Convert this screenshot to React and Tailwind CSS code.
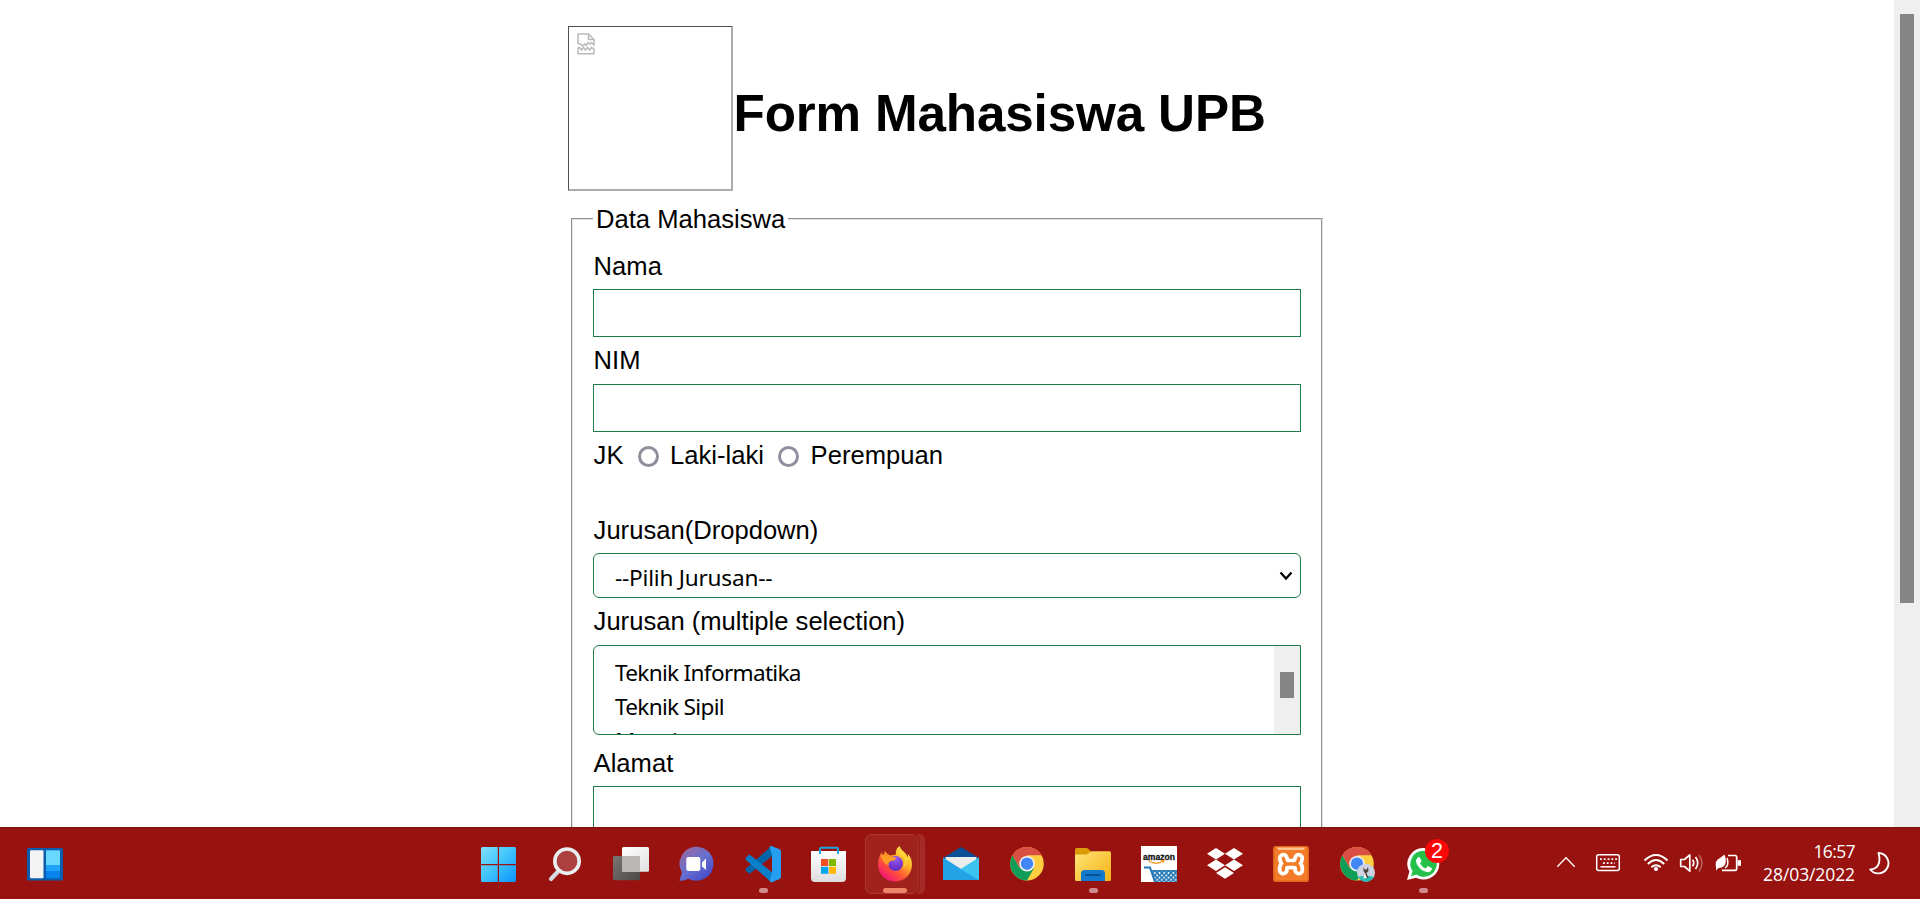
import React from "react";

const inputBorder = "border border-[#1c7c4a]";
const optionText = "font-['Noto_Sans',sans-serif] text-[22.6px] whitespace-nowrap";

function Label({ children, className = "h-[47px] pt-2" }) {
  return <div className={`pl-[0.6px] leading-[30px] whitespace-nowrap ${className}`}>{children}</div>;
}

function Radio({ className }) {
  return <span className={`size-[21px] shrink-0 rounded-full border-[3px] border-[#8f8f9d] ${className}`} />;
}

function BrokenImage() {
  return (
    <div className="h-[165px] w-[165px] shrink-0 border-t border-r-2 border-b-2 border-l border-t-[#505050] border-r-[#acacac] border-b-[#acacac] border-l-[#505050] pt-[6px] pl-[8px]">
      <svg width="18" height="22" viewBox="0 0 18 22" fill="none" stroke="#bababa" strokeWidth="1.500">
        <path d="M1 10.500V1h10.500l5.500 5.500V12l-2.500-2.500-1.500 1.500-2-1.500-2 3-1.500-1.500-2 2L3.500 11z" />
        <path d="M11.500 1v5.500H17" />
        <path d="M1 20.800V15l1.500-.5L4.500 17l2-2.500 2 2.500 2-2.500 2 2.500 2-2.500 2.500 1.500v4.800z" />
      </svg>
    </div>
  );
}

function PageScrollbar() {
  return (
    <div className="w-[26px] shrink-0 bg-[#efefef] px-[6px] pt-[14px]">
      <div className="h-[589px] w-[14px] bg-[#858585]" />
    </div>
  );
}

function Form() {
  return (
    <fieldset className="mt-[13px] ml-[3px] min-h-[700px] w-[751px] border-2 border-[#e3e3e3] px-[20px] pt-[8px] [border-style:groove]">
      <legend className="px-[3px] leading-[30px]">Data Mahasiswa</legend>
      <Label className="h-[47px] pt-[9px]">Nama</Label>
      <div className={`h-12 w-[708px] ${inputBorder}`} />
      <Label>NIM</Label>
      <div className={`h-12 w-[708px] ${inputBorder}`} />
      <div className="flex h-[75px] items-start pt-2 pl-[0.6px] leading-[30px]">
        <span className="w-[31px]">JK</span>
        <Radio className="mt-[6px] ml-[13.400px]" />
        <span className="ml-[11px] w-[94px] whitespace-nowrap">Laki-laki</span>
        <Radio className="mt-[6px] ml-[14px]" />
        <span className="ml-[11.600px]">Perempuan</span>
      </div>
      <Label className="h-[46px] pt-2">Jurusan(Dropdown)</Label>
      <div className={`flex h-[45px] w-[708px] items-center justify-between rounded-[6px] pr-[7px] pl-[21px] ${inputBorder}`}>
        <span className={`pt-[4px] leading-[30px] tracking-[-0.22px] ${optionText}`}>--Pilih Jurusan--</span>
        <svg width="14" height="10" viewBox="0 0 14 10" fill="none" stroke="#000" strokeWidth="2.200">
          <path d="M1.500 1.500 7 7.500l5.500-6" />
        </svg>
      </div>
      <Label>Jurusan (multiple selection)</Label>
      <div className={`flex h-[90px] w-[708px] justify-between overflow-hidden rounded-l-[6px] pl-[21px] ${inputBorder}`}>
        <div className={`pt-[10px] leading-[34px] tracking-[-0.7px] ${optionText}`}>
          <div>Teknik Informatika</div>
          <div>Teknik Sipil</div>
          <div>Manajemen</div>
        </div>
        <div className="w-[26px] bg-[#efefef] px-[6px] pt-[26px]">
          <div className="h-[26px] w-[14px] bg-[#858585]" />
        </div>
      </div>
      <Label className="h-[51px] pt-[13px]">Alamat</Label>
      <div className={`h-[120px] w-[708px] ${inputBorder}`} />
    </fieldset>
  );
}

/* Each taskbar icon is drawn on a 66x72 cell. */
function Cell({ children }) {
  return (
    <svg className="shrink-0" width="66" height="72" viewBox="0 0 66 72" fill="none">
      {children}
    </svg>
  );
}

const Dot = () => <rect x="30" y="61" width="9" height="5" rx="2.500" fill="#d08c8c" />;

function ChromeMark() {
  return (
    <g>
      <circle cx="34" cy="36.700" r="16.800" fill="#ffcd40" />
      <path d="M19.450 28.300A16.800 16.800 0 0 0 34 53.500L41.100 41 34 36.700 26.700 40.800Z" fill="#0f9d58" />
      <path d="M19.450 28.300A16.800 16.800 0 0 1 48.550 28.300H34L27 41Z" fill="#d94f43" />
      <circle cx="34" cy="36.700" r="7.800" fill="#f1f1f1" />
      <circle cx="34" cy="36.700" r="6.200" fill="#4285f4" />
    </g>
  );
}

function TaskIcons() {
  return (
    <div className="flex">
      <Cell>
        <defs>
          <linearGradient id="win" x1="16" y1="20" x2="51" y2="55" gradientUnits="userSpaceOnUse">
            <stop stopColor="#7fe0fb" />
            <stop offset=".45" stopColor="#45c6fc" />
            <stop offset="1" stopColor="#0a94fb" />
          </linearGradient>
        </defs>
        <path d="M17 20h15.800v17H16V21zM34 20h16l1 1v16H34zM16 38.200h16.800V55H17l-1-1zM34 38.200h17V54l-1 1H34z" fill="url(#win)" />
      </Cell>
      <Cell>
        <path d="M27.500 44 20 52" stroke="#d3d9dd" strokeWidth="4.200" strokeLinecap="round" />
        <circle cx="36" cy="34.200" r="12.200" fill="#ad3f3f" stroke="#e9eef0" strokeWidth="3.600" />
      </Cell>
      <Cell>
        <defs>
          <linearGradient id="tv" x1="16" y1="29" x2="40" y2="53" gradientUnits="userSpaceOnUse">
            <stop stopColor="#7b7573" />
            <stop offset="1" stopColor="#4f4c4b" />
          </linearGradient>
          <linearGradient id="tw" x1="25" y1="20" x2="50" y2="45" gradientUnits="userSpaceOnUse">
            <stop stopColor="#fff" />
            <stop offset="1" stopColor="#e3e2e2" />
          </linearGradient>
        </defs>
        <rect x="16" y="29" width="27" height="24.300" rx="1.500" fill="url(#tv)" />
        <rect x="25" y="20" width="27" height="24.700" rx="1.500" fill="url(#tw)" />
        <path d="M25 29h17q1 0 1 1v14.700H26q-1 0-1-1z" fill="#bab7b7" />
      </Cell>
      <Cell>
        <defs>
          <linearGradient id="chat" x1="22" y1="23" x2="44" y2="50" gradientUnits="userSpaceOnUse">
            <stop stopColor="#926aa7" />
            <stop offset=".5" stopColor="#6870cf" />
            <stop offset="1" stopColor="#494eca" />
          </linearGradient>
        </defs>
        <path d="M33.500 19.800a17 17 0 1 1-8 32q-4 2-8.500 2.200-.7-.2-.4-1L19 45.500a17 17 0 0 1 14.500-25.700z" fill="url(#chat)" />
        <rect x="23.300" y="30" width="14" height="14" rx="2" fill="#fff" />
        <path d="M39 35.500 43 31.500V43l-4-3.500z" fill="#fff" />
      </Cell>
      <Cell>
        <path d="m17 44 2.500 2q1 .8 2 0L44 28.500V19.500q-1-.7-2.500.5L17 41.500q-1 1.200 0 2.500z" fill="#0065a9" />
        <path d="m17 30.500 2.500-2.300q1-.8 2 0L44 46v9q-1 .7-2.500-.5L17 33q-1-1.300 0-2.500z" fill="#0a7fc9" />
        <path d="M43 19.200q-1.500-.7-2.500.8L43 28v18l-2.500 8q1 1.300 3 1.100l7-3.200q1.500-.6 1.500-2.100V24.500q0-1.500-1.500-2.200z" fill="#269ff0" />
        <Dot />
      </Cell>
      <Cell>
        <defs>
          <linearGradient id="bag" x1="33" y1="24" x2="33" y2="55" gradientUnits="userSpaceOnUse">
            <stop stopColor="#fff" />
            <stop offset="1" stopColor="#dedede" />
          </linearGradient>
        </defs>
        <path d="M16 24h35v27q0 4-4 4H20q-4 0-4-4z" fill="url(#bag)" />
        <path d="M25 27v-5q0-1.200 1.200-1.200h15.600q1.200 0 1.200 1.200v5" stroke="#1ea7df" strokeWidth="2" />
        <path d="M26 32h7.300v7H26z" fill="#f25022" />
        <path d="M34 32h7v7h-7z" fill="#7fba00" />
        <path d="M26 39.800h7.300v7H26z" fill="#00a4ef" />
        <path d="M34 39.800h7v7h-7z" fill="#ffb900" />
      </Cell>
      <Cell>
        <defs>
          <linearGradient id="fx" x1="46" y1="22" x2="22" y2="52" gradientUnits="userSpaceOnUse">
            <stop stopColor="#fff24a" />
            <stop offset=".35" stopColor="#ffab24" />
            <stop offset=".65" stopColor="#ff5038" />
            <stop offset="1" stopColor="#f0107d" />
          </linearGradient>
          <radialGradient id="globe" cx="35" cy="31" r="11" gradientUnits="userSpaceOnUse">
            <stop stopColor="#9a5cf5" />
            <stop offset="1" stopColor="#6a2fc4" />
          </radialGradient>
        </defs>
        <path d="M56 7.500h2q5.500 0 5.500 6v47q0 6-5.500 6h-2q3-2 3-6v-47q0-4-3-6z" fill="#a42a25" stroke="#ab3833" strokeWidth=".6" />
        <rect x="4.500" y="7.500" width="52.500" height="59" rx="6" fill="#a0221d" stroke="#ab3833" strokeWidth="1" />
        <path d="M38.500 19q1 3.500 4 5.500 3 2.500 4 5.500 1-.5 0-3.500 4.500 4.500 4.500 11.200A17 17 0 0 1 17 37.500q0-7.500 4-12.500l.5 3.500q1.500-1 2.500-4.500 2 3.500 5.500 4.500 3-.5 5.500-1-1-5 3.500-8.500z" fill="url(#fx)" />
        <circle cx="34.500" cy="36.500" r="7.500" fill="url(#globe)" />
        <path d="M19.500 28q5-1 8.500 1.500l7 1q0 3-4.500 3.500-4 .5-2.500 4.500-6-1-8.500-10.500z" fill="#ff9a22" />
        <path d="M34 27.500q6-2 9 4 2 5-1.500 10 5-2 5-9-.5-6-5.500-9-3 2-7 4z" fill="#ffd735" opacity=".75" />
        <rect x="22" y="61" width="24" height="5" rx="2.500" fill="#f08468" />
      </Cell>
      <Cell>
        <path d="M16 31 34 20l18 11v8H16z" fill="#0b4f96" />
        <path d="M18.500 30h31v14h-31z" fill="#ececec" />
        <path d="M16 30.500 34 42 16 53z" fill="#26a9e6" />
        <path d="M52 30.500 32 43l5 10h15z" fill="#3cc4f1" />
        <path d="M16 31 34 42.500 52 53H16z" fill="#24a2e6" />
      </Cell>
      <Cell>
        <ChromeMark />
      </Cell>
      <Cell>
        <defs>
          <linearGradient id="folder" x1="20" y1="24" x2="48" y2="54" gradientUnits="userSpaceOnUse">
            <stop stopColor="#ffe273" />
            <stop offset="1" stopColor="#f5b51a" />
          </linearGradient>
        </defs>
        <path d="M16 22.500Q16 21 17.500 21h9.500q1.500 0 2.500 1l3 3v5H16z" fill="#dc9c0a" />
        <path d="M16 27.500h11.500q1 0 2-1l2-1.700q.8-.6 2-.6h17q1.500 0 1.500 1.500v26.800q0 1.500-1.500 1.500h-33q-1.500 0-1.500-1.500z" fill="url(#folder)" />
        <path d="M22 54v-7.500q0-3.500 3.500-3.500h17q3.500 0 3.500 3.500V54z" fill="#1379ce" />
        <path d="M27 48h14" stroke="#07477f" strokeWidth="1.600" strokeLinecap="round" />
        <Dot />
      </Cell>
      <Cell>
        <defs>
          <pattern id="basket" width="4.600" height="4.600" patternUnits="userSpaceOnUse">
            <path d="M0 0 4.600 4.600M4.600 0 0 4.600" stroke="#2478b5" strokeWidth="1.500" />
          </pattern>
        </defs>
        <path d="M16 19h36v36H16z" fill="#fff" />
        <text x="18" y="32.500" fontFamily="Liberation Sans, sans-serif" fontWeight="700" fontSize="9.500" textLength="32" lengthAdjust="spacingAndGlyphs" fill="#111" stroke="#111" strokeWidth=".3">
          amazon
        </text>
        <path d="M23.500 34q8 4.500 15 0M36.500 33.500h2.500l-.8 2" stroke="#f59b23" strokeWidth="1.300" />
        <path d="M19 40.500h6l5 14.500" stroke="#2478b5" strokeWidth="2" />
        <path d="M26 43.500h26V55H30z" fill="url(#basket)" />
        <path d="M26 43.800h26" stroke="#2478b5" strokeWidth="1.400" />
      </Cell>
      <Cell>
        <path d="m25 21 9 5.700-9 5.700-9-5.700zM43 21l9 5.700-9 5.700-9-5.700zM25 32.500l9 5.700-9 5.700-9-5.700zM43 32.500l9 5.700-9 5.700-9-5.700zM34 40.300l9 5.700-9 5.800-9-5.800z" fill="#fff" />
      </Cell>
      <Cell>
        <rect x="16" y="19" width="36" height="36" rx="2.500" fill="#e0681d" />
        <rect x="17.500" y="20" width="33" height="33.500" rx="2" fill="#f47b27" />
        <path d="M19.500 20.500h29l-2 2.500h-25z" fill="#ffc38f" />
        <g strokeLinecap="round" strokeLinejoin="round">
          <path d="M26.300 31.300q1 5.700 4.500 5.700-5 0-4.500 6M41.700 31.300q-1 5.700-4.500 5.700 5 0 4.500 6M30 37h8" stroke="#fff" strokeWidth="11" />
          <path d="M26.300 31.300q1 5.700 4.500 5.700-5 0-4.500 6M41.700 31.300q-1 5.700-4.500 5.700 5 0 4.500 6M30 37h8" stroke="#f47b27" strokeWidth="3.400" />
        </g>
        <path d="M34 25.500v6M34 42.800v6" stroke="#f47b27" strokeWidth="3" />
      </Cell>
      <Cell>
        <ChromeMark />
        <circle cx="43" cy="45.700" r="9" fill="#cdd2e2" />
        <path d="M35 50q8-2.500 16 0-3 4.700-8 4.700T35 50z" fill="#25bbb0" />
        <path d="m40.500 40 1.200 2.500h2L45 40l.5 4-2 2 2 5h-4.500l1-5-1.500-2z" fill="#4c4238" />
        <path d="m42 46 2 5-4 .5z" fill="#f5efe4" />
      </Cell>
      <Cell>
        <path d="M34.500 21a15.800 15.800 0 1 1-7.500 29.700L18 53l2.400-8.500A15.800 15.800 0 0 1 34.500 21z" fill="#fff" />
        <path d="M34.500 23.800a13 13 0 1 1-7 23.800L22 49.200l1.600-5.200a13 13 0 0 1 10.900-20.200z" fill="#25c04a" />
        <path d="M28.800 30.500q1-.8 2 0l1.600 3.300q.2.700-.4 1.400l-1 1.200q2 3.600 5.700 5l1.600-1.900q.5-.5 1.200-.2l3 1.600q.7.400.3 1.600-1 2.900-4.500 2.600-4.500-.5-8-4.300-3.200-3.600-3.300-6.500 0-2.300 1.800-3.800z" fill="#fff" />
        <circle cx="48" cy="24" r="12" fill="#fb0808" />
        <text x="48" y="31" textAnchor="middle" fontFamily="Liberation Sans, sans-serif" fontSize="21.500" fill="#fff">
          2
        </text>
        <Dot />
      </Cell>
    </div>
  );
}

function Taskbar() {
  return (
    <div className="flex h-[72px] shrink-0 border-t border-[#7c100c] bg-[#98130f]">
      <div className="-mt-px flex">
        <div className="w-[465px]">
          <svg width="90" height="72" viewBox="0 0 90 72">
            <rect x="27" y="21" width="36" height="32.500" rx="1.500" fill="#0c5cae" />
            <rect x="30" y="23.300" width="13.500" height="28" rx="1" fill="#f4f4f4" />
            <path d="M46 23.300h14V38H46z" fill="#69d8ff" />
            <path d="M46 38h14v6H46z" fill="#1fa4fb" />
            <path d="M46 44h14v7.200H46z" fill="#0784ec" />
          </svg>
        </div>
        <TaskIcons />
        <svg className="ml-[87px]" width="204" height="72" viewBox="0 0 204 72" fill="none" stroke="#fff" strokeWidth="1.500">
          <path d="m15.300 39.700 8.700-9 8.700 9" strokeWidth="1.300" />
          <rect x="54.700" y="27.700" width="22.600" height="15.800" rx="2" />
          <path d="M58 32.200h17M61 36.200h12" strokeWidth="1.700" strokeDasharray="1.800 2" />
          <path d="M58.500 39.800h15" />
          <path d="M102.500 33.500q11.500-11 23 0M105.800 37q8.200-8 16.400 0M109.300 40.300q4.700-4.300 9.400 0" strokeWidth="1.900" />
          <circle cx="114" cy="42" r="2.100" fill="#fff" stroke="none" />
          <path d="M138.700 32.500h3.800l5.300-4.700v16.400l-5.300-4.700h-3.800z" strokeLinejoin="round" strokeWidth="1.700" />
          <path d="M150.500 32.800q2.500 3.200 0 6.500M153.500 30q4.500 6 0 12" strokeWidth="1.700" />
          <path d="M157 28q6 8 0 16.500" stroke="#ba625e" />
          <path d="M186 28.500h7q1.700 0 1.700 1.700v11.400q0 1.700-1.700 1.700h-13" strokeWidth="1.700" />
          <path d="M195.500 33.200h3.500v5.600h-3.500z" fill="#fff" stroke="none" />
          <path d="M174 41q-1.500-8 4-10l4.500-3.500q3 8-.5 11.500-3 2.500-5.500 2l-2.500 2.500z" fill="#fff" stroke="none" />
          <path d="M185 31q2.500 7-2 10" />
        </svg>
        <div className="flex w-[109px] flex-col items-end pt-[13px] font-['Open_Sans',sans-serif] text-[17.500px] leading-[23px] text-white">
          <span className="tracking-[-0.6px]">16:57</span>
          <span className="tracking-[-0.1px] whitespace-nowrap">28/03/2022</span>
        </div>
        <svg className="ml-[13px]" width="24" height="72" viewBox="0 0 24 72" fill="none" stroke="#fff" strokeWidth="1.900">
          <path d="M10.500 26a10.200 10.200 0 1 1-8.300 16.500C9 42 13.500 37 10.500 26z" strokeLinejoin="round" />
        </svg>
      </div>
    </div>
  );
}

export default function App() {
  return (
    <div className="flex h-[899px] w-[1920px] flex-col overflow-hidden bg-white font-['Liberation_Sans',Arial,sans-serif] text-[25.6px] text-black">
      <div className="flex h-[827px] overflow-hidden">
        <div className="flex-1 pt-[26px] pl-[568px]">
          <div className="flex h-[165px]">
            <BrokenImage />
            <h1 className="pt-[58px] pl-[0.5px] text-[51.2px] leading-[60px] font-bold tracking-[-0.14px] whitespace-nowrap">
              Form Mahasiswa UPB
            </h1>
          </div>
          <Form />
        </div>
        <PageScrollbar />
      </div>
      <Taskbar />
    </div>
  );
}
